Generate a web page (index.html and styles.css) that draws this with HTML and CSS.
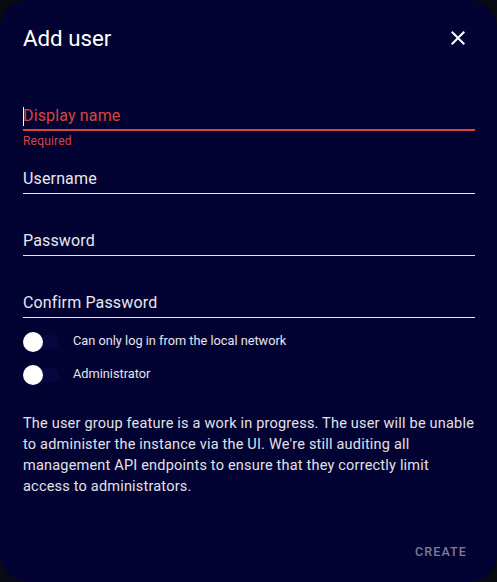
FILE: index.html
```html
<!DOCTYPE html>
<html>
<head>
<meta charset="utf-8">
<link rel="stylesheet" href="styles.css">
</head>
<body>
<div class="dialog">
  <div class="header">
    <h2 class="title">Add user</h2>
    <button class="close" aria-label="Close">
      <svg width="24" height="24" viewBox="0 0 24 24"><path fill="currentColor" d="M19,6.41L17.59,5L12,10.59L6.41,5L5,6.41L10.59,12L5,17.59L6.41,19L12,13.41L17.59,19L19,17.59L13.41,12L19,6.41Z"/></svg>
    </button>
  </div>
  <div class="field field-error">
    <span class="caret"></span><span class="label">Display name</span>
  </div>
  <div class="helper">Required</div>
  <div class="field field-first"><span class="label">Username</span></div>
  <div class="field"><span class="label">Password</span></div>
  <div class="field"><span class="label">Confirm Password</span></div>
  <div class="switches">
    <div class="switch-row">
      <span class="switch"><span class="track"></span><span class="thumb"></span></span>
      <span class="switch-label">Can only log in from the local network</span>
    </div>
    <div class="switch-row">
      <span class="switch"><span class="track"></span><span class="thumb"></span></span>
      <span class="switch-label">Administrator</span>
    </div>
  </div>
  <p class="note">The user group feature is a work in progress. The user will be unable to administer the instance via the UI. We're still auditing all management API endpoints to ensure that they correctly limit access to administrators.</p>
  <div class="actions">
    <button class="create">Create</button>
  </div>
</div>
</body>
</html>
```
FILE: styles.css
```css
html, body {
  margin: 0;
  padding: 0;
  background: #0a0a12;
}
body {
  width: 497px;
  height: 582px;
  overflow: hidden;
  font-family: Roboto, "Liberation Sans", sans-serif;
}
.dialog {
  box-sizing: border-box;
  width: 497px;
  height: 582px;
  background: #030333;
  border-radius: 28px;
  padding: 24px 22px 0 23px;
  display: flex;
  flex-direction: column;
  color: #e8e8ee;
}
.header {
  display: flex;
  justify-content: space-between;
  align-items: flex-start;
  height: 28px;
}
.title {
  margin: 0;
  font-size: 22.3px;
  line-height: 28px;
  font-weight: 400;
  color: #ffffff;
}
.close {
  background: none;
  border: 0;
  padding: 0;
  margin: 2px 5px 0 0;
  width: 24px;
  height: 24px;
  color: #ffffff;
  display: block;
}
.close svg { display: block; }
.field {
  position: relative;
  display: flex;
  align-items: flex-end;
  height: 20px;
  padding-bottom: 4px;
  border-bottom: 1px solid #e6e6ee;
  margin-top: 37px;
  font-size: 16px;
  line-height: 20px;
  letter-spacing: 0.15px;
}
.field-error {
  margin-top: 54px;
  padding-bottom: 3px;
  border-bottom: 2px solid #db4437;
  color: #db4437;
}
.field-first { margin-top: 20px; }
.caret {
  position: absolute;
  left: 0;
  top: 1px;
  width: 1px;
  height: 19px;
  background: #ffffff;
}
.helper {
  margin-top: 2px;
  font-size: 12px;
  line-height: 16px;
  color: #db4437;
  letter-spacing: 0.2px;
}
.switches {
  margin-top: 14px;
  display: flex;
  flex-direction: column;
  gap: 13px;
}
.switch-row {
  display: flex;
  align-items: center;
  height: 20px;
}
.switch {
  position: relative;
  width: 36px;
  height: 20px;
  flex: none;
}
.track {
  position: absolute;
  left: 0;
  top: 3px;
  width: 36px;
  height: 14px;
  border-radius: 7px;
  background: #070740;
}
.thumb {
  position: absolute;
  left: 0;
  top: 0;
  width: 20px;
  height: 20px;
  border-radius: 50%;
  background: #ffffff;
}
.switch-label {
  margin-left: 14px;
  font-size: 12.75px;
  line-height: 16px;
  margin-top: -2px;
  color: #e6e6ee;
}
.note {
  margin: 28px 0 0;
  font-size: 14.5px;
  line-height: 21px;
  color: #e1e1e6;
  letter-spacing: 0.2px;
}
.actions {
  margin-top: auto;
  display: flex;
  justify-content: flex-end;
  padding-bottom: 22px;
}
.create {
  background: none;
  border: 0;
  padding: 0;
  margin-right: 8px;
  font-family: Roboto, "Liberation Sans", sans-serif;
  font-size: 12.5px;
  font-weight: 500;
  letter-spacing: 1.1px;
  text-transform: uppercase;
  color: #7d7d8e;
  line-height: 16px;
}
```
